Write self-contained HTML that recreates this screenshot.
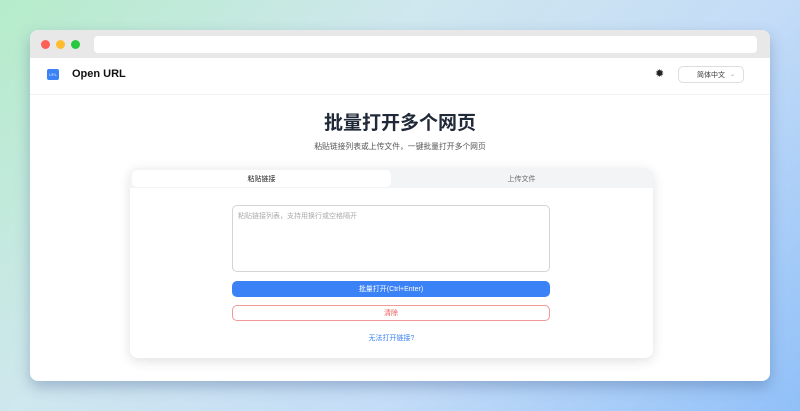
<!DOCTYPE html>
<html><head><meta charset="utf-8"><style>
*{margin:0;padding:0;box-sizing:border-box}
body{width:800px;height:411px;overflow:hidden;font-family:"Liberation Sans","Noto Sans CJK SC",sans-serif;background:linear-gradient(135deg,#b5ecc9 0%,#cfe7ee 35%,#c4dcf7 65%,#90c0f8 100%);position:relative}
.win{position:absolute;left:30px;top:30px;width:740px;height:351px;background:#fff;border-radius:8px;overflow:hidden;box-shadow:0 6px 14px rgba(60,90,140,.35)}
.bar{height:28px;background:#e8e8e8;position:relative}
.dot{position:absolute;top:10px;width:9px;height:9px;border-radius:50%}
.url{position:absolute;left:64px;top:6px;width:663px;height:17px;background:#fff;border-radius:4px}
.hdr{height:37px;border-bottom:1px solid #f1f1f1;position:relative}
.logo{position:absolute;left:17px;top:11px;width:12px;height:11px;background:#3b82f6;border-radius:2px;color:#cfe1ff;font-size:4px;line-height:11px;text-align:center}
.name{position:absolute;left:42px;top:10px;font-size:11px;font-weight:bold;color:#111}
.sun{position:absolute;left:625px;top:9px;font-size:11px;color:#222}
.lang{position:absolute;left:648px;top:8px;width:66px;height:17px;border:1px solid #ddd;border-radius:5px;font-size:7px;color:#333;display:flex;align-items:center;padding-left:18px}
.lang span{color:#999;margin-left:5px;font-size:6px}
h1{position:absolute;left:0;width:740px;top:78px;text-align:center;font-size:19px;color:#1f2937;font-weight:bold}
.sub{position:absolute;left:0;width:740px;top:111px;text-align:center;font-size:7.8px;color:#555}
.card{position:absolute;left:100px;top:138px;width:523px;height:190px;background:#fff;border-radius:8px;box-shadow:0 3px 12px rgba(0,0,0,.12)}
.tabs{position:absolute;left:0;top:0;width:523px;height:20px;background:#f3f4f6;border-radius:8px 8px 0 0}
.tab{position:absolute;top:2px;height:17px;font-size:7px;display:flex;align-items:center;justify-content:center;color:#222}
.tab.a{left:2px;width:259px;background:#fff;border-radius:5px}
.tab.b{left:262px;width:259px;color:#666}
.ta{position:absolute;left:102px;top:37px;width:318px;height:67px;border:1px solid #d4d4d4;border-radius:5px;font-size:7px;color:#aaa;padding:5px 5px}
.btn{position:absolute;left:102px;top:113px;width:318px;height:16px;background:#3b82f6;border-radius:5px;color:#fff;font-size:7px;display:flex;align-items:center;justify-content:center}
.clr{position:absolute;left:102px;top:137px;width:318px;height:16px;border:1px solid #f09a9a;border-radius:5px;color:#e55;font-size:7px;display:flex;align-items:center;justify-content:center}
.lnk{position:absolute;left:0;width:523px;top:165px;text-align:center;font-size:7px;color:#3b82f6}
</style></head><body>
<div class="win">
<div class="bar"><div class="dot" style="left:11px;background:#fe5f57"></div><div class="dot" style="left:26px;background:#febc2e"></div><div class="dot" style="left:41px;background:#28c840"></div><div class="url"></div></div>
<div class="hdr"><div class="logo">URL</div><div class="name">Open URL</div><div class="sun">✹</div><div class="lang">简体中文<span>⌄</span></div></div>
<h1>批量打开多个网页</h1>
<div class="sub">粘贴链接列表或上传文件，一键批量打开多个网页</div>
<div class="card">
<div class="tabs"><div class="tab a">粘贴链接</div><div class="tab b">上传文件</div></div>
<div class="ta">粘贴链接列表，支持用换行或空格隔开</div>
<div class="btn">批量打开(Ctrl+Enter)</div>
<div class="clr">清除</div>
<div class="lnk">无法打开链接?</div>
</div>
</div>
</body></html>
